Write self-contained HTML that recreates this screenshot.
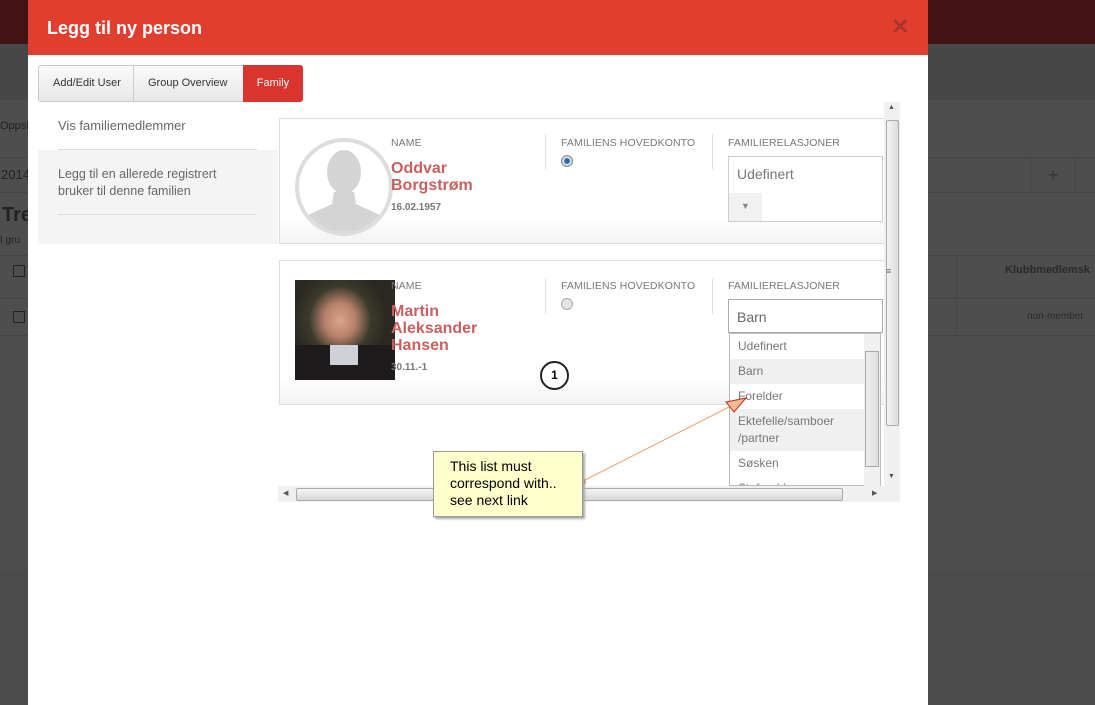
<!DOCTYPE html>
<html><head><meta charset="utf-8"><style>
*{box-sizing:border-box;margin:0;padding:0}
body{width:1095px;height:705px;overflow:hidden;background:#4b4b4b;font-family:"Liberation Sans",Arial,sans-serif;position:relative}
.a{position:absolute}
.lab{font-size:10.5px;color:#777;letter-spacing:.1px}
.nm{font-size:16px;font-weight:bold;color:#c9605f;line-height:17px}
</style></head><body>
<div class="a" style="left:0;top:0;width:1095px;height:44px;background:#431313"></div>
<div class="a" style="left:0;top:44px;width:1095px;height:56px;background:#474747"></div>
<div class="a" style="left:0;top:100px;width:1095px;height:470px;background:#4e4e4e"></div>
<div class="a" style="left:0;top:120px;font-size:11px;color:#222">Oppsl</div>
<div class="a" style="left:0;top:157px;width:1095px;height:36px;border-top:1px solid #444;border-bottom:1px solid #444"></div>
<div class="a" style="left:1px;top:167px;font-size:13px;color:#222">2014</div>
<div class="a" style="left:1030px;top:157px;width:46px;height:36px;border-left:1px solid #444;border-right:1px solid #444;color:#333;font-size:18px;text-align:center;line-height:36px">+</div>
<div class="a" style="left:2px;top:204px;font-size:20px;font-weight:bold;color:#222">Tre</div>
<div class="a" style="left:0;top:235px;font-size:10px;color:#222">I gru</div>
<div class="a" style="left:0;top:255px;width:1095px;height:1px;background:#444"></div>
<div class="a" style="left:0;top:298px;width:1095px;height:1px;background:#444"></div>
<div class="a" style="left:0;top:335px;width:1095px;height:1px;background:#444"></div>
<div class="a" style="left:13px;top:265px;width:12px;height:12px;border:1px solid #222"></div>
<div class="a" style="left:13px;top:311px;width:12px;height:12px;border:1px solid #222"></div>
<div class="a" style="left:956px;top:255px;width:1px;height:80px;background:#444"></div>
<div class="a" style="left:1005px;top:264px;font-size:11px;font-weight:bold;color:#2a2a2a">Klubbmedlemsk</div>
<div class="a" style="left:1027px;top:311px;font-size:10px;color:#2a2a2a">non-member</div>

<div class="a" style="left:28px;top:0;width:900px;height:705px;background:#fff"></div>
<div class="a" style="left:28px;top:0;width:900px;height:55px;background:#e03f30"></div>
<div class="a" style="left:47px;top:18px;font-size:18px;font-weight:bold;color:#fff">Legg til ny person</div>
<div class="a" style="left:891px;top:14px;font-size:22px;font-weight:bold;color:#a8342a">✕</div>

<div class="a" style="left:38px;top:65px;width:265px;height:37px;border:1px solid #c8c8c8;border-radius:3px;background:linear-gradient(#fafafa,#e8e8e8)"></div>
<div class="a" style="left:133px;top:65px;width:1px;height:37px;background:#ccc"></div>
<div class="a" style="left:243px;top:65px;width:60px;height:37px;background:#d9342d;border-radius:0 3px 3px 0;color:#fff;font-size:11px;text-align:center;line-height:37px">Family</div>
<div class="a" style="left:53px;top:77px;font-size:11px;color:#333">Add/Edit User</div>
<div class="a" style="left:148px;top:77px;font-size:11px;color:#333">Group Overview</div>

<div class="a" style="left:38px;top:150px;width:240px;height:94px;background:#f4f4f4"></div>
<div class="a" style="left:58px;top:118px;font-size:13px;color:#666">Vis familiemedlemmer</div>
<div class="a" style="left:58px;top:149px;width:199px;height:1px;background:#ddd"></div>
<div class="a" style="left:58px;top:166px;font-size:12.5px;color:#666;line-height:17px">Legg til en allerede registrert<br>bruker til denne familien</div>
<div class="a" style="left:58px;top:214px;width:199px;height:1px;background:#ddd"></div>

<!-- card1 -->
<div class="a" style="left:279px;top:118px;width:606px;height:126px;border:1px solid #ddd;background:linear-gradient(#fff 80%,#f3f3f3)"></div>
<svg class="a" style="left:294px;top:136px" width="100" height="100"><circle cx="50" cy="51" r="47" fill="#fff" stroke="#ddd" stroke-width="4"/><clipPath id="c"><circle cx="50" cy="51" r="45"/></clipPath><g clip-path="url(#c)" fill="#d4d4d4"><ellipse cx="50" cy="36" rx="17" ry="22"/><path d="M40 56 L60 56 L62 68 L88 80 L95 100 L5 100 L12 80 L38 68Z"/></g></svg>
<div class="a lab" style="left:391px;top:137px">NAME</div>
<div class="a nm" style="left:391px;top:160px">Oddvar<br>Borgstrøm</div>
<div class="a" style="left:391px;top:202px;font-size:10px;font-weight:bold;color:#777">16.02.1957</div>
<div class="a" style="left:545px;top:134px;width:1px;height:35px;background:#ddd"></div>
<div class="a lab" style="left:561px;top:137px">FAMILIENS HOVEDKONTO</div>
<div class="a" style="left:561px;top:155px;width:12px;height:12px;border-radius:50%;border:1px solid #888;background:radial-gradient(#2a6ea0 35%,#cde 45%)"></div>
<div class="a" style="left:712px;top:134px;width:1px;height:35px;background:#ddd"></div>
<div class="a lab" style="left:728px;top:137px">FAMILIERELASJONER</div>
<div class="a" style="left:728px;top:156px;width:155px;height:66px;border:1px solid #ccc;background:#fff"></div>
<div class="a" style="left:737px;top:166px;font-size:14px;color:#777">Udefinert</div>
<div class="a" style="left:729px;top:193px;width:33px;height:28px;background:#f1f1f1;color:#888;font-size:9px;text-align:center;line-height:26px">▼</div>

<!-- card2 -->
<div class="a" style="left:279px;top:260px;width:606px;height:145px;border:1px solid #ddd;background:linear-gradient(#fff 80%,#f3f3f3)"></div>
<div class="a" style="left:295px;top:280px;width:100px;height:100px;background:radial-gradient(ellipse at 45% 40%,#d9a58a 0,#b8806a 20%,#3a3a2a 40%,#2b2822 60%),linear-gradient(#5a6a3a,#2a2a2a)"></div>
<div class="a" style="left:295px;top:345px;width:100px;height:35px;background:#1f1a1c"></div>
<div class="a" style="left:330px;top:345px;width:28px;height:20px;background:#cfd0d8"></div>
<div class="a lab" style="left:391px;top:280px">NAME</div>
<div class="a nm" style="left:391px;top:303px">Martin<br>Aleksander<br>Hansen</div>
<div class="a" style="left:391px;top:362px;font-size:10px;font-weight:bold;color:#777">30.11.-1</div>
<div class="a" style="left:545px;top:279px;width:1px;height:35px;background:#ddd"></div>
<div class="a lab" style="left:561px;top:280px">FAMILIENS HOVEDKONTO</div>
<div class="a" style="left:561px;top:298px;width:12px;height:12px;border-radius:50%;border:1px solid #aaa;background:#e4e4e4"></div>
<div class="a" style="left:712px;top:279px;width:1px;height:35px;background:#ddd"></div>
<div class="a lab" style="left:728px;top:280px">FAMILIERELASJONER</div>
<div class="a" style="left:728px;top:299px;width:155px;height:34px;border:1px solid #aaa;background:#fff"></div>
<div class="a" style="left:737px;top:309px;font-size:14px;color:#666">Barn</div>
<div class="a" style="left:540px;top:361px;width:29px;height:29px;border:2px solid #222;border-radius:50%;text-align:center;font-size:12px;font-weight:bold;line-height:25px">1</div>

<!-- dropdown list -->
<div class="a" style="left:729px;top:333px;width:152px;height:153px;border:1px solid #bbb;background:#fff;overflow:hidden;font-size:12px;color:#777">
 <div style="height:25px;padding:5px 8px">Udefinert</div>
 <div style="height:25px;padding:5px 8px;background:#f0f0f0">Barn</div>
 <div style="height:25px;padding:5px 8px">Forelder</div>
 <div style="height:42px;padding:4px 8px;background:#f0f0f0;line-height:17px">Ektefelle/samboer<br>/partner</div>
 <div style="height:25px;padding:5px 8px">Søsken</div>
 <div style="height:25px;padding:5px 8px">Steforelder</div>
</div>
<div class="a" style="left:864px;top:334px;width:16px;height:152px;background:#f0f0f0"></div>
<div class="a" style="left:865px;top:351px;width:14px;height:116px;border:1px solid #aaa;background:linear-gradient(90deg,#eee,#ddd)"></div>

<!-- scrollbars -->
<div class="a" style="left:884px;top:102px;width:16px;height:384px;background:#f0f0f0"></div>
<div class="a" style="left:886px;top:120px;width:13px;height:306px;border:1px solid #aaa;border-radius:2px;background:linear-gradient(90deg,#f4f4f4,#dcdcdc)"></div>
<div class="a" style="left:886px;top:266px;font-size:9px;color:#666">≡</div>
<div class="a" style="left:888px;top:104px;font-size:7px;color:#555">▲</div>
<div class="a" style="left:888px;top:473px;font-size:7px;color:#555">▼</div>
<div class="a" style="left:278px;top:486px;width:622px;height:16px;background:#f0f0f0"></div>
<div class="a" style="left:296px;top:488px;width:547px;height:13px;border:1px solid #aaa;border-radius:2px;background:linear-gradient(#f4f4f4,#d8d8d8)"></div>
<div class="a" style="left:283px;top:489px;font-size:7px;color:#555">◀</div>
<div class="a" style="left:872px;top:489px;font-size:7px;color:#555">▶</div>

<!-- annotation -->
<svg class="a" style="left:0;top:0" width="1095" height="705"><line x1="581" y1="482" x2="735" y2="404" stroke="#f0a070" stroke-width="1"/><polygon points="726,402 746,398 734,412" fill="#f8b890" stroke="#b03020"/><circle cx="581" cy="482" r="4" fill="#f8b890" stroke="#b03020"/></svg>
<div class="a" style="left:433px;top:451px;width:150px;height:66px;background:#ffffcc;border:1px solid #999;box-shadow:2px 2px 2px #aaa;padding:6px 0 0 16px;font-size:14px;line-height:17px;color:#000">This list must<br>correspond with..<br>see next link</div>
</body></html>
